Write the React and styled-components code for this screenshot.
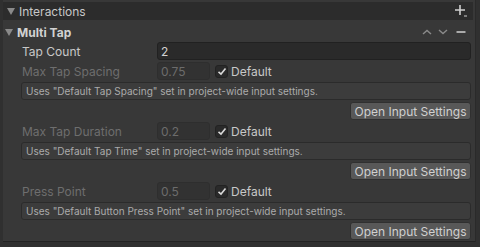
import React from "react";
import styled, { createGlobalStyle } from "styled-components";

const Global = createGlobalStyle`
	html, body{
		margin:0;
		padding:0;
		background-color:#303030;
	}
	*{
		box-sizing:border-box;
	}
`;

const Page = styled.div`
	width:480px;
	height:247px;
	overflow:hidden;
	background-color:#303030;
	font-family:Inter, "Noto Sans", sans-serif;
	color:#c8c8c8;
`;

const Panel = styled.div`
	width:473px;
	height:242px;
	margin-left:3px;
	padding-top:2px;
	background-color:#383838;
	border-right:1px solid #2a2a2a;
	border-bottom:1px solid #232323;
`;

const Header = styled.div`
	height:18px;
	margin-right:2px;
	display:flex;
	align-items:center;
	padding-left:4px;
	padding-right:4px;
	background-color:#2c2c2c;
	font-size:12px;
	color:#c8c8c8;
`;

const SubHeader = styled.div`
	height:18px;
	margin-top:3px;
	display:flex;
	align-items:center;
	padding-left:2px;
	padding-right:4px;
	font-size:12px;
	font-weight:700;
	color:#d2d2d2;
`;

const Arrow = styled.span`
	width:0;
	height:0;
	margin-right:4px;
	border-left:4px solid transparent;
	border-right:4px solid transparent;
	border-top:7px solid #8a8a8a;
`;

const Title = styled.span`
	flex:1;
`;

const IconBtn = styled.span`
	display:flex;
	align-items:center;
	justify-content:center;
	width:${p => p.w || 16}px;
	height:16px;
`;

const Body = styled.div`
	padding-left:18px;
	padding-right:4px;
	display:flex;
	flex-direction:column;
`;

const Row = styled.div`
	height:18px;
	margin-top:${p => p.mt || 0}px;
	display:flex;
	align-items:center;
	gap:4px;
	font-size:12px;
`;

const Label = styled.div`
	width:132px;
	padding-left:1px;
	color:${p => p.disabled ? "#6e6e6e" : "#c8c8c8"};
`;

const Field = styled.div`
	height:18px;
	width:${p => p.w ? p.w + "px" : "auto"};
	flex:${p => p.w ? "none" : 1};
	display:flex;
	align-items:center;
	padding-left:3px;
	border:1px solid ${p => p.disabled ? "#2e2e2e" : "#212121"};
	border-radius:3px;
	background-color:${p => p.disabled ? "#323232" : "#2a2a2a"};
	color:${p => p.disabled ? "#6c6c6c" : "#d2d2d2"};
	font-size:12px;
`;

const Check = styled.span`
	width:13px;
	height:13px;
	margin-left:1px;
	display:flex;
	align-items:center;
	justify-content:center;
	border:1px solid #222;
	border-radius:3px;
	background-color:#2a2a2a;
`;

const CheckText = styled.span`
	margin-left:-1px;
	color:#c8c8c8;
`;

const HelpBox = styled.div`
	height:18px;
	margin-top:2px;
	display:flex;
	align-items:center;
	padding-left:4px;
	border:1px solid #2b2b2b;
	border-radius:3px;
	background-color:#3c3c3c;
	font-size:10px;
	color:#ababab;
	white-space:nowrap;
`;

const ButtonRow = styled.div`
	display:flex;
	justify-content:flex-end;
	margin-top:2px;
`;

const Button = styled.button`
	height:18px;
	width:121px;
	padding:0;
	border:1px solid #303030;
	border-radius:3px;
	background-color:#585858;
	color:#d0d0d0;
	font-family:inherit;
	font-size:12px;
`;

const CheckMark = () => (
	<svg width="10" height="9" viewBox="0 0 10 9">
		<path d="M1.5 4.8 L4 7 L8.5 1.5" fill="none" stroke="#d8d8d8" strokeWidth="1.6" />
	</svg>
);

const Plus = () => (
	<svg width="14" height="14" viewBox="0 0 14 14">
		<path d="M6 1 V11 M1 6 H11" stroke="#d0d0d0" strokeWidth="1.6" />
		<path d="M10 12 H13" stroke="#d0d0d0" strokeWidth="1" />
	</svg>
);

const Chevron = ({ up }) => (
	<svg width="10" height="6" viewBox="0 0 10 6">
		<path d={up ? "M1 5 L5 1.5 L9 5" : "M1 1 L5 4.5 L9 1"} fill="none" stroke="#8a8a8a" strokeWidth="1.4" />
	</svg>
);

const Minus = () => (
	<svg width="10" height="4" viewBox="0 0 10 4">
		<path d="M0.5 2 H9.5" stroke="#c8c8c8" strokeWidth="1.6" />
	</svg>
);

const params = [
	{ label: "Max Tap Spacing", value: "0.75", help: "Uses \"Default Tap Spacing\" set in project-wide input settings." },
	{ label: "Max Tap Duration", value: "0.2", help: "Uses \"Default Tap Time\" set in project-wide input settings." },
	{ label: "Press Point", value: "0.5", help: "Uses \"Default Button Press Point\" set in project-wide input settings." }
];

const App = () => {
	const paramMap = params.map((p, idx) => {
		return(
			<React.Fragment key={idx}>
				<Row mt={2}>
					<Label disabled>{p.label}</Label>
					<Field w={53} disabled>{p.value}</Field>
					<Check><CheckMark /></Check>
					<CheckText>Default</CheckText>
				</Row>
				<HelpBox>{p.help}</HelpBox>
				<ButtonRow>
					<Button>Open Input Settings</Button>
				</ButtonRow>
			</React.Fragment>
		)
	});

	return(
		<>
			<Global />
			<Page>
				<Panel>
					<Header>
						<Arrow />
						<Title>Interactions</Title>
						<IconBtn><Plus /></IconBtn>
					</Header>
					<SubHeader>
						<Arrow />
						<Title>Multi Tap</Title>
						<IconBtn><Chevron up /></IconBtn>
						<IconBtn><Chevron /></IconBtn>
						<IconBtn w={20}><Minus /></IconBtn>
					</SubHeader>
					<Body>
						<Row mt={1}>
							<Label>Tap Count</Label>
							<Field>2</Field>
						</Row>
						{paramMap}
					</Body>
				</Panel>
			</Page>
		</>
	)
}

export default App;
